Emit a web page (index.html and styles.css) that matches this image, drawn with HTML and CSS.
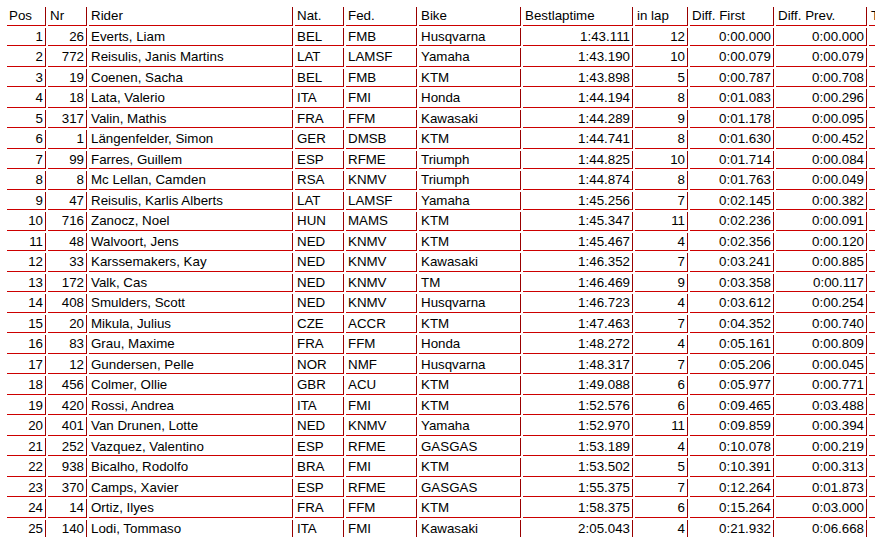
FILE: index.html
```html
<!DOCTYPE html>
<html>
<head>
<meta charset="utf-8">
<title>Results</title>
<link rel="stylesheet" href="styles.css">
</head>
<body>
<table class="results">
<colgroup>
<col class="c-pos"><col class="c-nr"><col class="c-rider"><col class="c-nat"><col class="c-fed"><col class="c-bike"><col class="c-best"><col class="c-lap"><col class="c-diff1"><col class="c-diff2"><col class="c-time">
</colgroup>
<thead>
<tr><th>Pos</th><th>Nr</th><th>Rider</th><th>Nat.</th><th>Fed.</th><th>Bike</th><th>Bestlaptime</th><th>in lap</th><th>Diff. First</th><th>Diff. Prev.</th><th>Time</th></tr>
</thead>
<tbody>
<tr><td class="num">1</td><td class="num">26</td><td>Everts, Liam</td><td>BEL</td><td>FMB</td><td>Husqvarna</td><td class="num">1:43.111</td><td class="num">12</td><td class="num">0:00.000</td><td class="num">0:00.000</td><td></td></tr>
<tr><td class="num">2</td><td class="num">772</td><td>Reisulis, Janis Martins</td><td>LAT</td><td>LAMSF</td><td>Yamaha</td><td class="num">1:43.190</td><td class="num">10</td><td class="num">0:00.079</td><td class="num">0:00.079</td><td></td></tr>
<tr><td class="num">3</td><td class="num">19</td><td>Coenen, Sacha</td><td>BEL</td><td>FMB</td><td>KTM</td><td class="num">1:43.898</td><td class="num">5</td><td class="num">0:00.787</td><td class="num">0:00.708</td><td></td></tr>
<tr><td class="num">4</td><td class="num">18</td><td>Lata, Valerio</td><td>ITA</td><td>FMI</td><td>Honda</td><td class="num">1:44.194</td><td class="num">8</td><td class="num">0:01.083</td><td class="num">0:00.296</td><td></td></tr>
<tr><td class="num">5</td><td class="num">317</td><td>Valin, Mathis</td><td>FRA</td><td>FFM</td><td>Kawasaki</td><td class="num">1:44.289</td><td class="num">9</td><td class="num">0:01.178</td><td class="num">0:00.095</td><td></td></tr>
<tr><td class="num">6</td><td class="num">1</td><td>Längenfelder, Simon</td><td>GER</td><td>DMSB</td><td>KTM</td><td class="num">1:44.741</td><td class="num">8</td><td class="num">0:01.630</td><td class="num">0:00.452</td><td></td></tr>
<tr><td class="num">7</td><td class="num">99</td><td>Farres, Guillem</td><td>ESP</td><td>RFME</td><td>Triumph</td><td class="num">1:44.825</td><td class="num">10</td><td class="num">0:01.714</td><td class="num">0:00.084</td><td></td></tr>
<tr><td class="num">8</td><td class="num">8</td><td>Mc Lellan, Camden</td><td>RSA</td><td>KNMV</td><td>Triumph</td><td class="num">1:44.874</td><td class="num">8</td><td class="num">0:01.763</td><td class="num">0:00.049</td><td></td></tr>
<tr><td class="num">9</td><td class="num">47</td><td>Reisulis, Karlis Alberts</td><td>LAT</td><td>LAMSF</td><td>Yamaha</td><td class="num">1:45.256</td><td class="num">7</td><td class="num">0:02.145</td><td class="num">0:00.382</td><td></td></tr>
<tr><td class="num">10</td><td class="num">716</td><td>Zanocz, Noel</td><td>HUN</td><td>MAMS</td><td>KTM</td><td class="num">1:45.347</td><td class="num">11</td><td class="num">0:02.236</td><td class="num">0:00.091</td><td></td></tr>
<tr><td class="num">11</td><td class="num">48</td><td>Walvoort, Jens</td><td>NED</td><td>KNMV</td><td>KTM</td><td class="num">1:45.467</td><td class="num">4</td><td class="num">0:02.356</td><td class="num">0:00.120</td><td></td></tr>
<tr><td class="num">12</td><td class="num">33</td><td>Karssemakers, Kay</td><td>NED</td><td>KNMV</td><td>Kawasaki</td><td class="num">1:46.352</td><td class="num">7</td><td class="num">0:03.241</td><td class="num">0:00.885</td><td></td></tr>
<tr><td class="num">13</td><td class="num">172</td><td>Valk, Cas</td><td>NED</td><td>KNMV</td><td>TM</td><td class="num">1:46.469</td><td class="num">9</td><td class="num">0:03.358</td><td class="num">0:00.117</td><td></td></tr>
<tr><td class="num">14</td><td class="num">408</td><td>Smulders, Scott</td><td>NED</td><td>KNMV</td><td>Husqvarna</td><td class="num">1:46.723</td><td class="num">4</td><td class="num">0:03.612</td><td class="num">0:00.254</td><td></td></tr>
<tr><td class="num">15</td><td class="num">20</td><td>Mikula, Julius</td><td>CZE</td><td>ACCR</td><td>KTM</td><td class="num">1:47.463</td><td class="num">7</td><td class="num">0:04.352</td><td class="num">0:00.740</td><td></td></tr>
<tr><td class="num">16</td><td class="num">83</td><td>Grau, Maxime</td><td>FRA</td><td>FFM</td><td>Honda</td><td class="num">1:48.272</td><td class="num">4</td><td class="num">0:05.161</td><td class="num">0:00.809</td><td></td></tr>
<tr><td class="num">17</td><td class="num">12</td><td>Gundersen, Pelle</td><td>NOR</td><td>NMF</td><td>Husqvarna</td><td class="num">1:48.317</td><td class="num">7</td><td class="num">0:05.206</td><td class="num">0:00.045</td><td></td></tr>
<tr><td class="num">18</td><td class="num">456</td><td>Colmer, Ollie</td><td>GBR</td><td>ACU</td><td>KTM</td><td class="num">1:49.088</td><td class="num">6</td><td class="num">0:05.977</td><td class="num">0:00.771</td><td></td></tr>
<tr><td class="num">19</td><td class="num">420</td><td>Rossi, Andrea</td><td>ITA</td><td>FMI</td><td>KTM</td><td class="num">1:52.576</td><td class="num">6</td><td class="num">0:09.465</td><td class="num">0:03.488</td><td></td></tr>
<tr><td class="num">20</td><td class="num">401</td><td>Van Drunen, Lotte</td><td>NED</td><td>KNMV</td><td>Yamaha</td><td class="num">1:52.970</td><td class="num">11</td><td class="num">0:09.859</td><td class="num">0:00.394</td><td></td></tr>
<tr><td class="num">21</td><td class="num">252</td><td>Vazquez, Valentino</td><td>ESP</td><td>RFME</td><td>GASGAS</td><td class="num">1:53.189</td><td class="num">4</td><td class="num">0:10.078</td><td class="num">0:00.219</td><td></td></tr>
<tr><td class="num">22</td><td class="num">938</td><td>Bicalho, Rodolfo</td><td>BRA</td><td>FMI</td><td>KTM</td><td class="num">1:53.502</td><td class="num">5</td><td class="num">0:10.391</td><td class="num">0:00.313</td><td></td></tr>
<tr><td class="num">23</td><td class="num">370</td><td>Camps, Xavier</td><td>ESP</td><td>RFME</td><td>GASGAS</td><td class="num">1:55.375</td><td class="num">7</td><td class="num">0:12.264</td><td class="num">0:01.873</td><td></td></tr>
<tr><td class="num">24</td><td class="num">14</td><td>Ortiz, Ilyes</td><td>FRA</td><td>FFM</td><td>KTM</td><td class="num">1:58.375</td><td class="num">6</td><td class="num">0:15.264</td><td class="num">0:03.000</td><td></td></tr>
<tr><td class="num">25</td><td class="num">140</td><td>Lodi, Tommaso</td><td>ITA</td><td>FMI</td><td>Kawasaki</td><td class="num">2:05.043</td><td class="num">4</td><td class="num">0:21.932</td><td class="num">0:06.668</td><td></td></tr>
</tbody>
</table>
</body>
</html>
```
FILE: styles.css
```css
html, body {
  margin: 0;
  padding: 0;
  background: #ffffff;
  overflow: hidden;
}

.results {
  margin: 5px 0 0 5px;
  border-collapse: separate;
  border-spacing: 2px;
  table-layout: fixed;
  width: 950px;
  font-family: "Liberation Sans", Arial, sans-serif;
  font-size: 13.33px;
  line-height: 15.5px;
  color: #000;
}

.results th,
.results td {
  box-sizing: border-box;
  padding: 1px 2px 1px 2px;
  border-right: 1px solid #990000;
  border-bottom: 1px solid #cc0000;
  text-align: left;
  font-weight: normal;
  white-space: nowrap;
  overflow: hidden;
  vertical-align: middle;
}

.results td.num {
  text-align: right;
}

.c-pos { width: 39px; }
.c-nr { width: 39px; }
.c-rider { width: 204px; }
.c-nat { width: 49px; }
.c-fed { width: 71px; }
.c-bike { width: 102px; }
.c-best { width: 110px; }
.c-lap { width: 53px; }
.c-diff1 { width: 84px; }
.c-diff2 { width: 91px; }
.c-time { width: 86px; }
```
